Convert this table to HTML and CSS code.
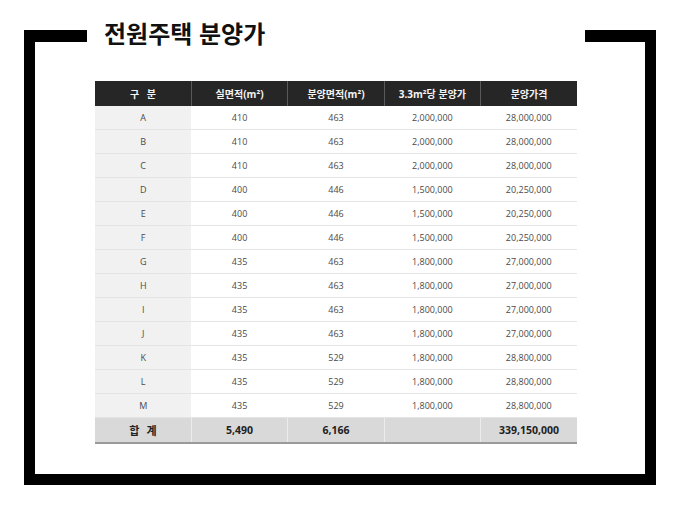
FILE: index.html
```html
<!DOCTYPE html>
<html lang="ko">
<head>
<meta charset="utf-8">
<link rel="stylesheet" href="styles.css">
</head>
<body>
<div class="page">
  <div class="frame">
    <div class="frame-top">
      <div class="bar bar-left"></div>
      <h1 class="title">전원주택 분양가</h1>
      <div class="spacer"></div>
      <div class="bar bar-right"></div>
    </div>
    <div class="frame-body">
      <table class="price">
        <thead>
          <tr><th class="wide">구 분</th><th>실면적(m²)</th><th>분양면적(m²)</th><th>3.3m²당 분양가</th><th>분양가격</th></tr>
        </thead>
        <tbody>
          <tr><td class="key">A</td><td>410</td><td>463</td><td>2,000,000</td><td>28,000,000</td></tr>
          <tr><td class="key">B</td><td>410</td><td>463</td><td>2,000,000</td><td>28,000,000</td></tr>
          <tr><td class="key">C</td><td>410</td><td>463</td><td>2,000,000</td><td>28,000,000</td></tr>
          <tr><td class="key">D</td><td>400</td><td>446</td><td>1,500,000</td><td>20,250,000</td></tr>
          <tr><td class="key">E</td><td>400</td><td>446</td><td>1,500,000</td><td>20,250,000</td></tr>
          <tr><td class="key">F</td><td>400</td><td>446</td><td>1,500,000</td><td>20,250,000</td></tr>
          <tr><td class="key">G</td><td>435</td><td>463</td><td>1,800,000</td><td>27,000,000</td></tr>
          <tr><td class="key">H</td><td>435</td><td>463</td><td>1,800,000</td><td>27,000,000</td></tr>
          <tr><td class="key">I</td><td>435</td><td>463</td><td>1,800,000</td><td>27,000,000</td></tr>
          <tr><td class="key">J</td><td>435</td><td>463</td><td>1,800,000</td><td>27,000,000</td></tr>
          <tr><td class="key">K</td><td>435</td><td>529</td><td>1,800,000</td><td>28,800,000</td></tr>
          <tr><td class="key">L</td><td>435</td><td>529</td><td>1,800,000</td><td>28,800,000</td></tr>
          <tr><td class="key">M</td><td>435</td><td>529</td><td>1,800,000</td><td>28,800,000</td></tr>
        </tbody>
        <tfoot>
          <tr><td class="sum-key">합 계</td><td>5,490</td><td>6,166</td><td></td><td>339,150,000</td></tr>
        </tfoot>
      </table>
    </div>
  </div>
</div>
</body>
</html>
```
FILE: styles.css
```css
html, body {
  margin: 0;
  padding: 0;
  background: #fff;
}
body {
  font-family: "Open Sans", "Noto Sans CJK KR", sans-serif;
}
.page {
  padding: 30px 0 0 24px;
}
.frame {
  width: 632px;
}
.frame-top {
  display: flex;
  height: 12px;
}
.bar {
  background: #000;
  height: 12px;
}
.bar-left {
  width: 63px;
}
.bar-right {
  width: 71px;
}
.spacer {
  flex: 1;
}
.title {
  margin: -9px 0 0 17px;
  height: 12px;
  line-height: 24px;
  font-family: "Noto Sans CJK KR", sans-serif;
  font-size: 24px;
  font-weight: 700;
  color: #111;
  white-space: nowrap;
}
.frame-body {
  border: 11px solid #000;
  border-top: 0;
  padding: 39px 0 0 60px;
  box-sizing: border-box;
  height: 443px;
}
.price {
  width: 482px;
  border-collapse: collapse;
  table-layout: fixed;
  text-align: center;
}
.price th {
  background: #262626;
  color: #f4f4f4;
  font-family: "Open Sans", "Noto Sans CJK KR", sans-serif;
  font-size: 10px;
  font-weight: 700;
  height: 25px;
  padding: 0;
  border-left: 1px solid #5a5a5a;
}
.price th:first-child {
  border-left: 0;
}
.price th.wide {
  word-spacing: 5px;
}
.price td {
  height: 23px;
  padding: 0;
  font-size: 9px;
  color: #4a4a4a;
  border-bottom: 1px solid #e4e4e4;
}
.price td.key {
  background: #f1f1f1;
}
.price tfoot td {
  height: 24px;
  background: #d9d9d9;
  color: #222;
  font-weight: 700;
  font-size: 10.5px;
  border-bottom: 2px solid #9a9a9a;
  border-left: 1px solid #ececec;
}
.price tfoot td:first-child {
  border-left: 0;
}
.price td.sum-key {
  font-family: "Noto Sans CJK KR", sans-serif;
  font-size: 11px;
  word-spacing: 4px;
}
```
